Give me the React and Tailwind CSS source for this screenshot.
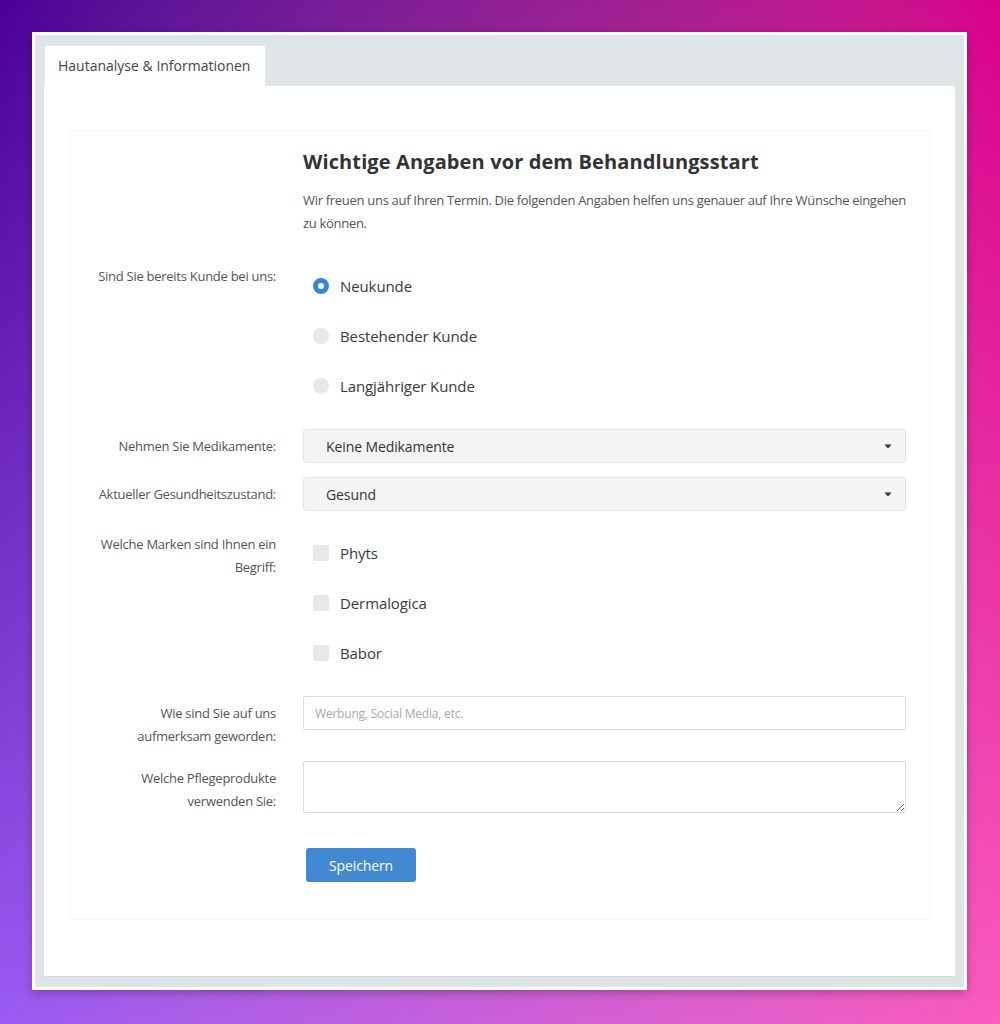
import React from "react";

const font = { fontFamily: '"Open Sans", "Noto Sans", sans-serif' };

function Radio({ checked, label }) {
  return (
    <div className="flex h-[50px] items-center">
      <span className="ml-[10px] flex h-[16px] w-[16px] items-center justify-center">
        {checked ? (
          <span className="block h-[16px] w-[16px] rounded-full border-[5px] border-[#3a86d4] bg-white" />
        ) : (
          <span className="block h-[16px] w-[16px] rounded-full bg-[#e8e8e8]" />
        )}
      </span>
      <span className="ml-[11px] text-[15px] tracking-[-0.1px] text-[#3a3a3a]">{label}</span>
    </div>
  );
}

function Check({ label }) {
  return (
    <div className="flex h-[50px] items-center">
      <span className="ml-[10px] block h-[16px] w-[16px] rounded-[2px] bg-[#e8e8e8]" />
      <span className="ml-[11px] text-[15px] tracking-[-0.1px] text-[#3a3a3a]">{label}</span>
    </div>
  );
}

function Select({ value }) {
  return (
    <div className="flex h-[34px] w-[603px] items-center justify-between rounded-[3px] border border-[#e4e4e4] bg-[#f4f4f4] pl-[22px] pr-[13px]">
      <span className="text-[14px] tracking-[-0.1px] text-[#333]">{value}</span>
      <svg width="8" height="5" viewBox="0 0 8 5">
        <path d="M0.5 0.5 L7.5 0.5 L4 4.5 Z" fill="#333" />
      </svg>
    </div>
  );
}

function Label({ children, className = "" }) {
  return (
    <div className={"w-[186px] shrink-0 whitespace-nowrap text-right text-[13px] leading-[23px] tracking-[-0.27px] text-[#555] " + className}>
      {children}
    </div>
  );
}

export default function App() {
  return (
    <div className="relative h-[1024px] w-[1000px] overflow-hidden bg-gradient-to-r from-[#9a5cf2] to-[#fb5cbd]" style={font}>
      <div className="pointer-events-none absolute inset-0 bg-gradient-to-r from-[#4a0098] to-[#d9008a] [mask-image:linear-gradient(to_bottom,black,transparent)]" />
      <div className="relative pl-[32px] pt-[32px]">
        <div className="w-[935px] bg-white p-[3px] shadow-[0_3px_8px_rgba(0,0,0,0.25)]">
          <div className="bg-[#dfe4e8] px-[9px] pb-[10px] pt-[10px]">
            <div className="flex">
              <div className="flex h-[41px] w-[222px] items-center rounded-t-[3px] border border-b-0 border-[#e6e9ec] bg-white pb-[2px] pl-[13px] text-[14px] text-[#444]">
                Hautanalyse &amp; Informationen
              </div>
            </div>
            <div className="h-[891px] border-b border-[#d4d9dd] bg-white pl-[26px] pr-[25px] pt-[44px]">
              <div className="h-[790px] rounded-[2px] border border-[#f6f6f6] pl-[19px] pt-[17px]">
                <div className="ml-[213px] w-[610px]">
                  <h1 className="text-[20px] font-bold leading-[28px] tracking-[0.12px] text-[#333]">
                    Wichtige Angaben vor dem Behandlungsstart
                  </h1>
                  <p className="mt-[13px] whitespace-nowrap text-[13px] leading-[23px] tracking-[-0.3px] text-[#555]">
                    Wir freuen uns auf Ihren Termin. Die folgenden Angaben helfen uns genauer auf Ihre Wünsche eingehen
                    <br />
                    zu können.
                  </p>
                </div>

                <div className="mt-[26px] flex gap-[27px]">
                  <Label className="pt-[4px]">Sind Sie bereits Kunde bei uns:</Label>
                  <div>
                    <Radio checked label="Neukunde" />
                    <Radio label="Bestehender Kunde" />
                    <Radio label="Langjähriger Kunde" />
                  </div>
                </div>

                <div className="mt-[18px] flex items-center gap-[27px]">
                  <Label>Nehmen Sie Medikamente:</Label>
                  <Select value="Keine Medikamente" />
                </div>

                <div className="mt-[14px] flex items-center gap-[27px]">
                  <Label>Aktueller Gesundheitszustand:</Label>
                  <Select value="Gesund" />
                </div>

                <div className="mt-[17px] flex gap-[27px]">
                  <Label className="pt-[5px]">
                    Welche Marken sind Ihnen ein
                    <br />
                    Begriff:
                  </Label>
                  <div>
                    <Check label="Phyts" />
                    <Check label="Dermalogica" />
                    <Check label="Babor" />
                  </div>
                </div>

                <div className="mt-[18px] flex gap-[27px]">
                  <Label className="pt-[6px]">
                    Wie sind Sie auf uns
                    <br />
                    aufmerksam geworden:
                  </Label>
                  <input
                    type="text"
                    placeholder="Werbung, Social Media, etc."
                    className="h-[34px] w-[603px] rounded-[2px] border border-[#dcdcdc] bg-white px-[11px] text-[12px] tracking-[-0.2px] text-[#333] outline-none placeholder:text-[#a8a8a8]"
                    style={font}
                  />
                </div>

                <div className="mt-[13px] flex gap-[27px]">
                  <Label className="pt-[6px]">
                    Welche Pflegeprodukte
                    <br />
                    verwenden Sie:
                  </Label>
                  <textarea
                    className="h-[52px] w-[603px] resize-y rounded-[2px] border border-[#dcdcdc] bg-white px-[11px] py-[6px] text-[12px] outline-none"
                    style={font}
                  />
                </div>

                <div className="mt-[35px] flex gap-[27px]">
                  <div className="w-[186px] shrink-0" />
                  <button className="ml-[3px] h-[34px] w-[110px] rounded-[3px] bg-[#4289d1] text-[14px] tracking-[-0.1px] text-white">
                    Speichern
                  </button>
                </div>
              </div>
            </div>
          </div>
        </div>
      </div>
    </div>
  );
}
